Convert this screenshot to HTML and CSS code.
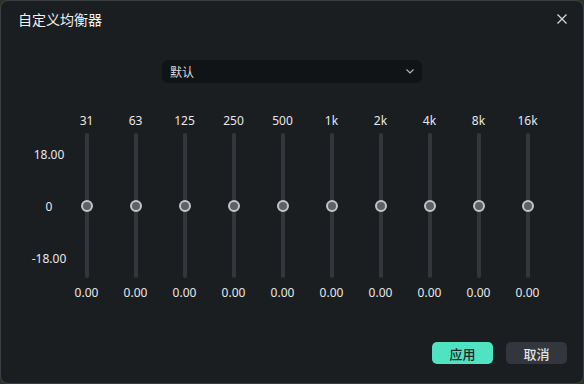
FILE: index.html
```html
<!DOCTYPE html>
<html>
<head>
    <title>自定义均衡器</title>
    <link rel="stylesheet" href="styles.css">
</head>
<body>
    <div id="dialog">
        <div id="title-bar">
            <span id="title">自定义均衡器</span>
            <button id="close-button">
                <svg viewBox="0 0 10 10" width="10" height="10"><path d="M0.5 0.5L9.5 9.5M9.5 0.5L0.5 9.5" stroke="#d6d7d8" stroke-width="1.3" fill="none"/></svg>
            </button>
        </div>
        <div id="preset-row">
            <div id="preset-select">
                <span>默认</span>
                <svg viewBox="0 0 8 5" width="8" height="5"><path d="M0.5 0.5L4 4L7.5 0.5" stroke="#b8babc" stroke-width="1.1" fill="none"/></svg>
            </div>
        </div>
        <div id="eq">
            <div class="scale">
                <span class="scale-top">18.00</span>
                <span class="scale-mid">0</span>
                <span class="scale-bottom">-18.00</span>
            </div>
            <div class="band"><span class="freq">31</span><div class="track"><div class="knob"></div></div><span class="gain">0.00</span></div>
            <div class="band"><span class="freq">63</span><div class="track"><div class="knob"></div></div><span class="gain">0.00</span></div>
            <div class="band"><span class="freq">125</span><div class="track"><div class="knob"></div></div><span class="gain">0.00</span></div>
            <div class="band"><span class="freq">250</span><div class="track"><div class="knob"></div></div><span class="gain">0.00</span></div>
            <div class="band"><span class="freq">500</span><div class="track"><div class="knob"></div></div><span class="gain">0.00</span></div>
            <div class="band"><span class="freq">1k</span><div class="track"><div class="knob"></div></div><span class="gain">0.00</span></div>
            <div class="band"><span class="freq">2k</span><div class="track"><div class="knob"></div></div><span class="gain">0.00</span></div>
            <div class="band"><span class="freq">4k</span><div class="track"><div class="knob"></div></div><span class="gain">0.00</span></div>
            <div class="band"><span class="freq">8k</span><div class="track"><div class="knob"></div></div><span class="gain">0.00</span></div>
            <div class="band"><span class="freq">16k</span><div class="track"><div class="knob"></div></div><span class="gain">0.00</span></div>
        </div>
        <div id="footer">
            <button id="apply-button">应用</button>
            <button id="cancel-button">取消</button>
        </div>
    </div>
</body>
</html>
```

FILE: styles.css
```css
body {
    margin: 0;
    padding: 0;
    background-color: #2b3327;
    font-family: "Noto Sans", "Noto Sans CJK SC", sans-serif;
    color: #e6e7e8;
    width: 584px;
    height: 384px;
    overflow: hidden;
}
#dialog {
    width: 584px;
    height: 384px;
    box-sizing: border-box;
    background-color: #1b1e21;
    border: 1px solid #3b3f44;
    border-radius: 8px;
    display: flex;
    flex-direction: column;
}
#title-bar {
    height: 35px;
    display: flex;
    align-items: center;
    justify-content: space-between;
    padding: 0 16px 0 17px;
}
#title {
    font-size: 14px;
    color: #f0f1f2;
    font-family: "Noto Sans CJK SC", sans-serif;
}
#close-button {
    background: none;
    border: none;
    padding: 0;
    width: 10px;
    height: 10px;
    display: flex;
}
#preset-row {
    display: flex;
    justify-content: center;
    margin-top: 24px;
}
#preset-select {
    width: 260px;
    height: 23px;
    box-sizing: border-box;
    background-color: #111417;
    border-radius: 6px;
    display: flex;
    align-items: center;
    justify-content: space-between;
    padding: 0 8px 0 8px;
    font-size: 12px;
    color: #d8d9da;
    font-family: "Noto Sans CJK SC", sans-serif;
}
#eq {
    display: flex;
    margin-top: 30px;
    padding-left: 35px;
}
.scale {
    width: 26px;
    display: flex;
    flex-direction: column;
    align-items: center;
    padding-top: 20px;
    font-size: 12px;
    color: #e6e7e8;
}
.scale span {
    height: 16px;
    line-height: 16px;
    white-space: nowrap;
}
.scale-top {
    margin-top: 14px;
}
.scale-mid {
    margin-top: 36px;
}
.scale-bottom {
    margin-top: 36px;
}
.band {
    width: 49px;
    display: flex;
    flex-direction: column;
    align-items: center;
    font-size: 12px;
}
.freq, .gain {
    height: 16px;
    line-height: 16px;
    color: #e6e7e8;
}
.track {
    width: 4px;
    height: 145px;
    margin: 4px 0 7px 0;
    background-color: #33363b;
    border-radius: 2px;
    display: flex;
    align-items: center;
    justify-content: center;
}
.knob {
    width: 8px;
    height: 8px;
    flex-shrink: 0;
    border-radius: 50%;
    background-color: #5e6166;
    border: 2px solid #c3c5c7;
}
#footer {
    margin-top: auto;
    display: flex;
    justify-content: flex-end;
    gap: 13px;
    padding: 0 16px 19px 0;
}
#footer button {
    width: 61px;
    height: 22px;
    border: none;
    border-radius: 5px;
    font-size: 13px;
    font-family: "Noto Sans CJK SC", sans-serif;
    font-weight: 500;
    padding: 0;
}
#apply-button {
    background-color: #50e3c2;
    color: #1d2a27;
}
#cancel-button {
    background-color: #33373d;
    color: #e2e3e4;
}
```
